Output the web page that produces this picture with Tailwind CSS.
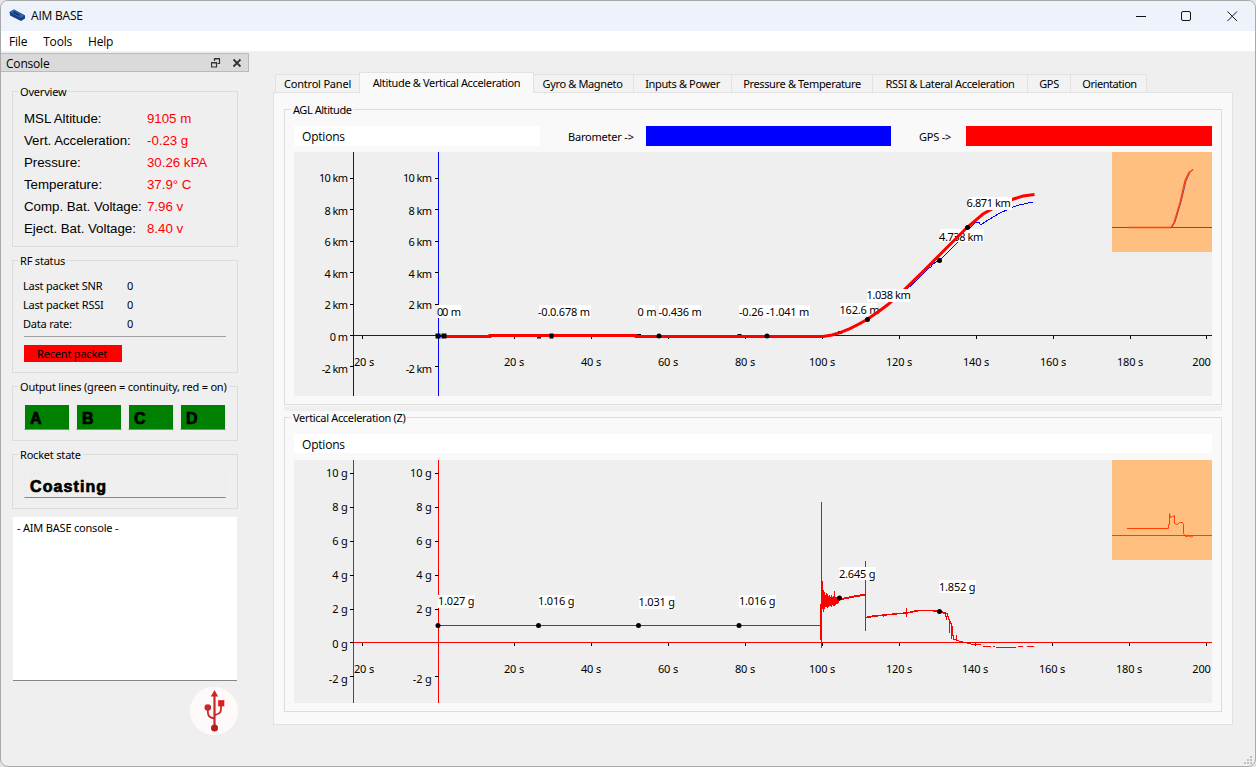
<!DOCTYPE html>
<html lang="en">
<head>
  <meta charset="UTF-8" />
  <meta name="viewport" content="width=device-width, initial-scale=1.0" />
  <title>AIM BASE</title>
  <script src="https://cdn.jsdelivr.net/npm/@tailwindcss/browser@4"></script>
</head>
<body class="bg-[#e4e4e4] w-[1256px] h-[767px] overflow-hidden">

  <div class="w-full h-full flex flex-col bg-[#efefef] border border-[#a9a9a9] rounded-[8px] overflow-hidden text-black font-['Noto_Sans',sans-serif] text-[11px] leading-[15px] tracking-[-0.2px]">

    <!-- Title bar -->
    <div class="h-[30px] shrink-0 bg-[#eef3fb] flex items-center pl-2 font-['Open_Sans',sans-serif] text-xs">
      <svg class="w-[17px] h-[13px] -mt-[2px]" viewBox="0 0 17 13">
        <path d="M.500 3 5 .500 16 6.500v3L12 12 1 6.500z" fill="#1d3f7c" />
        <path d="M.500 3 5 .500 16 6.500 12 9z" fill="#2f62ae" />
        <path d="M4.500 3l6 3.300" stroke="#16325f" stroke-width="1.500" />
      </svg>
      <span class="ml-[5px]">AIM BASE</span>
      <svg class="ml-auto mr-[17px] -mt-px w-[102px] h-[12px]" viewBox="0 0 102 12" fill="none" stroke="#111">
        <path d="M0 6.500h10" />
        <rect x="45.500" y="1.500" width="9" height="9" rx="1.500" />
        <path d="M91.500 1.500l9.500 9.500M101 1.500l-9.500 9.500" />
      </svg>
    </div>

    <!-- Menu -->
    <div class="h-[20px] shrink-0 bg-white flex items-center gap-4 pl-2 pt-[2px] font-['Open_Sans',sans-serif] text-xs">
      <span>File</span>
      <span>Tools</span>
      <span>Help</span>
    </div>

    <div class="flex flex-1 min-h-0">

      <!-- Console dock -->
      <div class="w-[248px] shrink-0 flex flex-col pt-[2px]">
        <div class="h-[19px] shrink-0 bg-[#dadada] border border-l-0 border-[#b9b9b9] flex items-center pl-[5px] pr-[5px] font-['Open_Sans',sans-serif] text-xs">
          <span class="pt-[2px] tracking-[-0.2px]">Console</span>
          <svg class="ml-auto w-[32px] h-[10px]" viewBox="0 0 32 10" fill="none" stroke="#333">
            <path d="M3.500 3V.500h5v5H6.500M3 1h6" stroke-width="1.200" />
            <path d="M.500 4.500h5v4.500h-5zM0 5h6" stroke-width="1.200" />
            <path d="M22.500 1.500l7 7M29.500 1.500l-7 7" stroke-width="1.800" />
          </svg>
        </div>

        <div class="flex flex-col pl-[11px] w-[237px] pt-3">
          <fieldset class="h-[163px] border border-[#dcdcdc]">
            <legend class="ml-[5px] px-[2px]">Overview</legend>
            <div class="grid grid-cols-[123px_1fr] pl-[11px] pt-[9px] font-['Liberation_Sans',sans-serif] text-[13.33px] leading-[22px] tracking-[-0.04px] whitespace-nowrap">
              <span>MSL Altitude:</span><span class="text-[#f00]">9105 m</span>
              <span>Vert. Acceleration:</span><span class="text-[#f00]">-0.23 g</span>
              <span>Pressure:</span><span class="text-[#f00]">30.26 kPA</span>
              <span>Temperature:</span><span class="text-[#f00]">37.9° C</span>
              <span>Comp. Bat. Voltage:</span><span class="text-[#f00]">7.96 v</span>
              <span>Eject. Bat. Voltage:</span><span class="text-[#f00]">8.40 v</span>
            </div>
          </fieldset>

          <fieldset class="mt-[6px] h-[120px] border border-[#dcdcdc]">
            <legend class="ml-[5px] px-[2px]">RF status</legend>
            <div class="grid grid-cols-[104px_1fr] pl-[10px] pt-2 leading-[19px]">
              <span>Last packet SNR</span><span>0</span>
              <span>Last packet RSSI</span><span>0</span>
              <span>Data rate:</span><span>0</span>
            </div>
            <div class="mt-[3px] mx-[11px] h-px bg-[#a0a0a0]"></div>
            <div class="mt-2 ml-[11px] w-[98px] h-[17px] pr-[2px] bg-[#f00] text-center leading-[18px]">Recent packet</div>
          </fieldset>

          <fieldset class="mt-[6px] h-[62px] border border-[#dcdcdc]">
            <legend class="ml-[5px] px-[2px] whitespace-nowrap">Output lines (green = continuity, red = on)</legend>
            <div class="flex gap-[6px] pl-[11px] pt-[11px] font-['Liberation_Sans',sans-serif] text-base leading-[27px] font-black tracking-normal [-webkit-text-stroke:0.7px_black]">
              <div class="w-[46px] h-[25px] pl-[5px] bg-[#008000] border-x border-b border-x-[#e6efe6] border-b-[#6f9f6f]">A</div>
              <div class="w-[46px] h-[25px] pl-[5px] bg-[#008000] border-x border-b border-x-[#e6efe6] border-b-[#6f9f6f]">B</div>
              <div class="w-[46px] h-[25px] pl-[5px] bg-[#008000] border-x border-b border-x-[#e6efe6] border-b-[#6f9f6f]">C</div>
              <div class="w-[46px] h-[25px] pl-[5px] bg-[#008000] border-x border-b border-x-[#e6efe6] border-b-[#6f9f6f]">D</div>
            </div>
          </fieldset>

          <fieldset class="mt-[6px] h-[62px] border border-[#dcdcdc]">
            <legend class="ml-[5px] px-[2px]">Rocket state</legend>
            <div class="mt-[11px] mx-[11px] h-[25px] pl-[5px] border border-[#ececec] border-b-[#868686] font-['Liberation_Sans',sans-serif] text-base leading-[25px] font-black tracking-[1.1px] [-webkit-text-stroke:0.7px_black]">Coasting</div>
          </fieldset>

          <div class="mt-2 mr-px ml-px h-[164px] bg-white border-b border-[#868686] pl-1 pt-[3px]">- AIM BASE console -</div>

          <svg class="mt-[6px] ml-auto w-[48px] h-[48px]" viewBox="0 0 48 48">
            <circle cx="24" cy="24" r="24" fill="#fffafa" />
            <g fill="none" stroke="#c62828" stroke-width="1.800">
              <path d="M24.500 8v33" stroke-width="2.200" />
              <path d="M17.800 21v3.500c0 5 2 6 6.700 7" />
              <path d="M31 17v5c0 4-2 5-6.500 6" />
            </g>
            <path d="M24.500 3l3.700 6.500h-7.400z" fill="#c62828" />
            <circle cx="24.500" cy="41" r="3.500" fill="#b71c1c" />
            <circle cx="17.800" cy="20.500" r="3.300" fill="#c62828" />
            <rect x="28.500" y="13.500" width="5.500" height="5.500" fill="#c62828" stroke="#f00" stroke-opacity=".6" />
          </svg>
        </div>
      </div>

      <!-- Main tabs -->
      <div class="flex flex-col pl-6 pt-[21px] w-[984px] shrink-0">
        <div class="h-[20px] shrink-0 flex items-end pl-[2px] text-center leading-[17px] whitespace-nowrap tracking-[-0.35px]">
          <div class="w-[84px] h-[18px] bg-[#f2f2f2] border border-b-0 border-r-0 border-[#e2e2e2] tracking-[-0.2px]">Control Panel</div>
          <div class="w-[175px] h-[21px] -mb-px leading-[20px] bg-[#f9f9f9] border border-b-0 border-[#e2e2e2] relative">Altitude &amp; Vertical Acceleration</div>
          <div class="w-[100px] h-[18px] pr-[2px] bg-[#f2f2f2] border-t border-r border-[#e2e2e2]">Gyro &amp; Magneto</div>
          <div class="w-[98px] h-[18px] bg-[#f2f2f2] border-t border-r border-[#e2e2e2]">Inputs &amp; Power</div>
          <div class="w-[141px] h-[18px] bg-[#f2f2f2] border-t border-r border-[#e2e2e2]">Pressure &amp; Temperature</div>
          <div class="w-[155px] h-[18px] bg-[#f2f2f2] border-t border-r border-[#e2e2e2]">RSSI &amp; Lateral Acceleration</div>
          <div class="w-[43px] h-[18px] bg-[#f2f2f2] border-t border-r border-[#e2e2e2]">GPS</div>
          <div class="w-[76px] h-[18px] pl-[2px] bg-[#f2f2f2] border-t border-r border-[#e2e2e2] tracking-[-0.45px]">Orientation</div>
        </div>

        <div class="h-[633px] shrink-0 bg-[#f9f9f9] border border-[#e2e2e2] px-[10px] pt-[9px]">

          <!-- AGL altitude -->
          <fieldset class="h-[303px] border border-[#dcdcdc] px-[9px]">
            <legend class="ml-[-3px] px-[2px] tracking-[-0.45px]">AGL Altitude</legend>
            <div class="mt-[9px] h-[20px] flex items-center">
              <div class="w-[246px] h-full bg-white pl-2 font-['Open_Sans',sans-serif] text-xs leading-[22px]">Options</div>
              <span class="w-[106px] pl-7 pt-px">Barometer -&gt;</span>
              <div class="w-[245px] h-full bg-[#00f]"></div>
              <span class="w-[75px] pl-7 pt-px">GPS -&gt;</span>
              <div class="w-[246px] h-full bg-[#f00]"></div>
            </div>
            <svg class="block mt-[6px] w-[918px] h-[244px] bg-[#efefef]" viewBox="294 152 918 244">
              <path d="M353.500 152v244M438.500 152v244M353 335.500h859" stroke="#00f" fill="none" />
              <path d="M350 178.500h4m-4 31h4m-4 32h4m-4 31h4m-4 32h4m-4 31h4m-4 31h4M435 178.500h4m-4 31h4m-4 32h4m-4 31h4m-4 32h4m-4 62h4" stroke="#000" />
              <path d="M362.500 336v3M514.500 336v3M591.500 336v3M668.500 336v3M745.500 336v3M822.500 336v3M899.500 336v3M976.500 336v3M1053.500 336v3M1130.500 336v3M1206.500 336v3" stroke="#000" />
              <g text-anchor="end" class="tracking-[-0.6px]">
                <text x="347.500" y="182">10 km</text><text x="347.500" y="215">8 km</text><text x="347.500" y="246">6 km</text><text x="347.500" y="278">4 km</text><text x="347.500" y="309">2 km</text><text x="347.500" y="341">0 m</text><text x="347.500" y="373">-2 km</text>
                <text x="431.500" y="182">10 km</text><text x="431.500" y="215">8 km</text><text x="431.500" y="246">6 km</text><text x="431.500" y="278">4 km</text><text x="431.500" y="309">2 km</text><text x="431.500" y="373">-2 km</text>
              </g>
              <g text-anchor="middle">
                <text x="364" y="366">20 s</text><text x="514" y="366">20 s</text><text x="591" y="366">40 s</text><text x="668" y="366">60 s</text><text x="745" y="366">80 s</text><text x="822" y="366">100 s</text><text x="899" y="366">120 s</text><text x="976" y="366">140 s</text><text x="1053" y="366">160 s</text><text x="1130" y="366">180 s</text><text x="1201.500" y="366">200</text>
              </g>

              <!-- barometer series -->
              <path d="M438 336h386l10-1 8-3 12-6 13-7 21-15 18-14 13-12 10-10 2-1v-2l7-4 5-4 12-12 4-4 8-9 4-5 5-5 3 .500 2 2.500 3-2.500 15-9 13-6 7-2.500 14-3" stroke="#00f" fill="none" shape-rendering="crispEdges" />
              <g fill="#fff">
                <path d="M438 305h12v13h-12zM539 305h24v13h-24zM638 305h17v13h-17zM739 305h28v13h-28zM840 303h37v13h-37zM940 229h44v13h-44z" />
              </g>
              <text x="437" y="316">0</text><text x="538" y="316">-0.</text><text x="637.500" y="316">0 m</text><text x="739" y="316">-0.26</text><text x="839.500" y="314">162.6 m</text><text x="939" y="241" class="tracking-[-0.4px]">4.738 km</text>
              <path d="M435.500 333.500h5v5h-5zM537 335h4v3.500h-4zM637 334h4v3h-4zM737.500 334h4v3h-4zM838 331h4v3h-4z" />
              <circle cx="939.500" cy="260.500" r="2.500" />

              <!-- GPS series -->
              <path d="M444 336.500H490V335.500H636V336.500H823L832 335 840 332.700 850 328.700 860 323.500 867 319.500 880 310.500 888 304.500 905 289 923 271.500 967 227.500 983 214 992 209 1001 204 1012 199.500 1023 196 1034.500 194.500" stroke="#f00" stroke-width="3" fill="none" />
              <g fill="#fff">
                <path d="M444 305h17v13h-17zM551 305h40v13h-40zM659 305h43v13h-43zM766.500 305h43.500v13h-43.500zM867 289h43v13h-43zM968 197h44v13h-44z" />
              </g>
              <text x="442" y="316">0 m</text><text x="550" y="316">0.678 m</text><text x="658.500" y="316">-0.436 m</text><text x="766" y="316">-1.041 m</text><text x="866.500" y="299" class="tracking-[-0.4px]">1.038 km</text><text x="966.500" y="207" class="tracking-[-0.4px]">6.871 km</text>
              <path d="M441.500 333.500h5v5h-5zM549.500 333.500h4v5h-4z" />
              <g><circle cx="659" cy="336" r="2.500" /><circle cx="767" cy="336" r="2.500" /><circle cx="867.500" cy="319.500" r="2.500" /><circle cx="967.500" cy="227.500" r="2.500" /></g>

              <!-- minimap -->
              <rect x="1112" y="152" width="100" height="100" fill="#ffbf80" />
              <path d="M1112 227.500h100M1172 227l3-5 6-20 5-21 4-9 3-3" stroke="#7f4080" fill="none" />
              <path d="M1128 227.500h43l3-5 6-20 5-22 4-8 4-3" stroke="#ff4000" stroke-width="1.300" fill="none" />
            </svg>
          </fieldset>

          <div class="mt-px h-[5px] bg-[#efefef]"></div>

          <!-- Vertical acceleration -->
          <fieldset class="mt-[-1px] h-[302px] border border-[#dcdcdc] px-[9px]">
            <legend class="ml-[-3px] px-[2px] tracking-[-0.32px]">Vertical Acceleration (Z)</legend>
            <div class="mt-[9px] h-[19px] bg-white pl-2 font-['Open_Sans',sans-serif] text-xs leading-[22px]">Options</div>
            <svg class="block mt-[7px] w-[918px] h-[243px] bg-[#efefef]" viewBox="294 460 918 243">
              <path d="M353.500 460v243M438.500 460v243M353 642.500h859" stroke="#f00" fill="none" />
              <path d="M350 473.500h4m-4 34h4m-4 34h4m-4 34h4m-4 34h4m-4 33h4m-4 34h4M435 473.500h4m-4 34h4m-4 34h4m-4 34h4m-4 34h4m-4 67h4" stroke="#000" />
              <path d="M362.500 643v3M514.500 643v3M591.500 643v3M668.500 643v3M745.500 643v3M822.500 643v3M899.500 643v3M975.500 643v3M1052.500 643v3M1129.500 643v3M1206.500 643v3" stroke="#000" />
              <g text-anchor="end">
                <text x="347.500" y="477">10 g</text><text x="347.500" y="511">8 g</text><text x="347.500" y="545">6 g</text><text x="347.500" y="579">4 g</text><text x="347.500" y="613">2 g</text><text x="347.500" y="648">0 g</text><text x="347.500" y="683">-2 g</text>
                <text x="431.500" y="477">10 g</text><text x="431.500" y="511">8 g</text><text x="431.500" y="545">6 g</text><text x="431.500" y="579">4 g</text><text x="431.500" y="613">2 g</text><text x="431.500" y="683">-2 g</text>
              </g>
              <g text-anchor="middle">
                <text x="364" y="673">20 s</text><text x="514" y="673">20 s</text><text x="591" y="673">40 s</text><text x="668" y="673">60 s</text><text x="745" y="673">80 s</text><text x="822" y="673">100 s</text><text x="899" y="673">120 s</text><text x="975" y="673">140 s</text><text x="1052" y="673">160 s</text><text x="1129" y="673">180 s</text><text x="1201.500" y="673">200</text>
              </g>

              <g stroke="#f00" fill="none" shape-rendering="crispEdges">
                <path d="M438 625.500h382M820.500 604v36M821.500 502v146M822.500 581v28M823.500 590v22M824.500 592v17M825.500 595v12M826.500 593v14M827.500 594v14M828.500 596v11M829.500 595v11M830.500 597v9M831.500 595v12M832.500 597v8M833.500 596v10M834.500 591v15M835.500 597v8M836.500 597v7M837.500 598v6M838.500 597v6" />
                <path d="M838 600l6-1.500 10-2 6-1 5-1" stroke-width="2" />
                <path d="M865.500 561v70M866 618l7-1.500 10-1 17-2 7-.500 7-2 10-1h8l10 1.500 5 2 2 6 3 6 1 10 1 4h2v-4l1 5 8 2 8 2h8M983 646.500h8M993 646.500h2M996 647.500h20M1018 646.500h5M1027 646.500h7" />
                <path d="M867 617l7-1 26-2.500 7-.500 7-1.500 5-1h12l8 1 6 2 2 6M906.500 608v9M949.500 621v12M951.500 624v15M883.500 614v3" stroke-width="1.500" />
              </g>
              <g fill="#fff">
                <path d="M438 595h37v13h-37zM539 595h36v13h-36zM639 596h36v13h-36zM739 595h37v13h-37zM839 567h37v13h-37zM939 580h37v13h-37z" />
              </g>
              <text x="438" y="605">1.027 g</text><text x="538" y="605">1.016 g</text><text x="638.500" y="606">1.031 g</text><text x="739" y="605">1.016 g</text><text x="839" y="578">2.645 g</text><text x="939" y="591">1.852 g</text>
              <g><circle cx="438" cy="625.500" r="2.500" /><circle cx="538.500" cy="625.500" r="2.500" /><circle cx="638.500" cy="625.500" r="2.500" /><circle cx="739" cy="625.500" r="2.500" /><circle cx="839.500" cy="598" r="2.500" /><circle cx="939.500" cy="611.500" r="2.500" /></g>

              <!-- minimap -->
              <rect x="1112" y="460" width="100" height="100" fill="#ffbf80" />
              <path d="M1112 535.500h100M1127 528.500h41.500v-4h1v-11l1 4 2-1 2-1v8l3 1 2-2h3l1 2v9l2 3 4-.500 2 1 2-1.500" stroke="#ff4000" fill="none" />
            </svg>
          </fieldset>
        </div>
      </div>

      <svg class="ml-auto mt-auto mb-[2px] mr-[3px] w-[8px] h-[8px]" viewBox="0 0 8 8" fill="#bfbfbf">
        <path d="M6 0h2v2H6zM3 3h2v2H3zM6 3h2v2H6zM0 6h2v2H0zM3 6h2v2H3zM6 6h2v2H6z" />
      </svg>
    </div>
  </div>

</body>
</html>
